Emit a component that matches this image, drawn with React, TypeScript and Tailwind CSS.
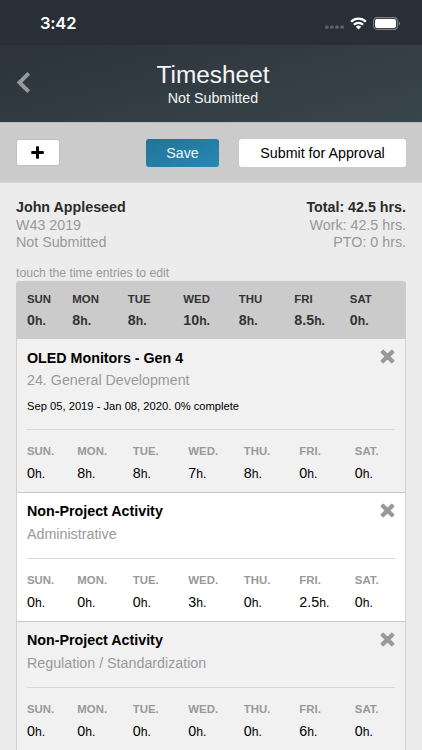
type Entry = {
  title: string;
  detail: string;
  dates?: string;
  hours: string[];
  shaded: boolean;
};

const DAYS = ['SUN', 'MON', 'TUE', 'WED', 'THU', 'FRI', 'SAT'];
const TOTALS = ['0', '8', '8', '10', '8', '8.5', '0'];

const ENTRIES: Entry[] = [
  {
    title: 'OLED Monitors - Gen 4',
    detail: '24. General Development',
    dates: 'Sep 05, 2019 - Jan 08, 2020. 0% complete',
    hours: ['0', '8', '8', '7', '8', '0', '0'],
    shaded: true,
  },
  {
    title: 'Non-Project Activity',
    detail: 'Administrative',
    hours: ['0', '0', '0', '3', '0', '2.5', '0'],
    shaded: false,
  },
  {
    title: 'Non-Project Activity',
    detail: 'Regulation / Standardization',
    hours: ['0', '0', '0', '0', '0', '6', '0'],
    shaded: true,
  },
];

function StatusBar() {
  return (
    <div className="flex h-[45px] items-center bg-[#292f36] pl-[40px] pr-[21px] pt-[2px]">
      <span className="-mt-px font-['Inter',sans-serif] text-[16.5px] font-semibold leading-5 tracking-[-0.2px]">3:42</span>
      <svg className="ml-auto mt-[7px]" width="19" height="4" viewBox="0 0 19 4" fill="#5b6167">
        <rect x="0" y="0.4" width="3.6" height="3.4" rx="1" />
        <rect x="5.1" y="0.4" width="3.6" height="3.4" rx="1" />
        <rect x="10.2" y="0.4" width="3.6" height="3.4" rx="1" />
        <rect x="15.3" y="0.4" width="3.6" height="3.4" rx="1" />
      </svg>
      <svg className="ml-[6px]" width="17" height="13" viewBox="0 0 17 13" fill="none" stroke="#fff" strokeWidth="2.3">
        <path d="M1.1 4.7a10.5 10.5 0 0 1 14.8 0" />
        <path d="M3.9 7.7a6.5 6.5 0 0 1 9.2 0" />
        <path d="M8.5 12.5 5.8 9.8a3.8 3.8 0 0 1 5.4 0z" fill="#fff" stroke="none" />
      </svg>
      <svg className="ml-[6px]" width="28" height="13" viewBox="0 0 28 13">
        <rect x="0.6" y="0.6" width="23.8" height="11.8" rx="3.4" fill="none" stroke="#7d8286" strokeWidth="1.1" />
        <rect x="2" y="2" width="21" height="9" rx="2" fill="#fff" />
        <path d="M25.7 4.5c1.7.5 1.7 3.5 0 4z" fill="#7d8286" />
      </svg>
    </div>
  );
}

function CloseIcon() {
  return (
    <svg className="mt-[9.5px] shrink-0" width="15" height="15" viewBox="0 0 15 15">
      <path
        d="M3.2 1.6 7.5 5.9 11.8 1.6 13.4 3.2 9.1 7.5 13.4 11.8 11.8 13.4 7.5 9.1 3.2 13.4 1.6 11.8 5.9 7.5 1.6 3.2z"
        fill="#999"
        stroke="#999"
        strokeWidth="2"
        strokeLinejoin="round"
      />
    </svg>
  );
}

function Hours({ value }: { value: string }) {
  return (
    <div className="h-[18px] whitespace-nowrap text-[14.27px] leading-[18px]">
      {value}
      <span className="text-[12.2px]">h.</span>
    </div>
  );
}

function EntryCard({ entry }: { entry: Entry }) {
  return (
    <section className={`border-b border-[#c8c8c8] px-[10px] ${entry.shaded ? 'bg-[#f1f1f1]' : 'bg-white'}`}>
      <div className="flex justify-between">
        <div className={entry.dates ? 'pt-[9px]' : 'pt-[8px]'}>
          <h2 className={`text-[14.27px] font-bold leading-5 text-black ${entry.dates ? 'h-[22px]' : 'h-[23px]'}`}>
            {entry.title}
          </h2>
          <p className="h-5 text-[14.27px] leading-[21px] text-[#999]">{entry.detail}</p>
          {entry.dates && <p className="mt-[7px] h-[18px] text-[11.2px] leading-[18px] text-black">{entry.dates}</p>}
        </div>
        <CloseIcon />
      </div>
      <div className="mt-[14px] border-t border-[#d8d8d8]" />
      <div className="grid grid-cols-[50.3px_repeat(5,55.5px)_1fr] pb-[10px] pt-[13px]">
        {DAYS.map((day, i) => (
          <div key={day}>
            <div className="h-[21px] text-[11.4px] font-bold leading-4 text-[#999]">{day}.</div>
            <div className="text-black">
              <Hours value={entry.hours[i]} />
            </div>
          </div>
        ))}
      </div>
    </section>
  );
}

export default function App() {
  return (
    <div className="h-[750px] overflow-hidden bg-[#ececec] font-['Liberation_Sans',Arial,sans-serif]">
      <header className="h-[122px] bg-linear-[165deg,#292f36,#39454c] text-white">
        <StatusBar />
        <div className="grid h-[77px] grid-cols-[48px_1fr_44px]">
          <svg className="ml-[16px] mt-[26px]" width="15" height="23" viewBox="0 0 15 23" fill="none" stroke="#969a9e" strokeWidth="4">
            <path d="M12.7 2.4 3.5 11.5l9.2 9.1" />
          </svg>
          <div className="pt-[16px] text-center text-[#f4f5f6]">
            <h1 className="h-[27px] text-[24.4px] leading-[28px]">Timesheet</h1>
            <p className="h-[20px] text-[14.27px] leading-[20px]">Not Submitted</p>
          </div>
        </div>
      </header>

      <div className="flex h-[61px] items-center border-b border-t border-b-[#d8d8d8] border-t-[#bdbdbd] bg-[#cbcbcb] px-[16px]">
        <button className="flex h-[27px] w-[44px] items-center justify-center rounded-[3px] border border-[#bfbfbf] bg-white pr-px">
          <svg width="13" height="13" viewBox="0 0 13 13" fill="#000">
            <rect x="5" y="0.3" width="3" height="12.4" rx="0.8" />
            <rect x="0.2" y="5" width="12.6" height="3" rx="0.8" />
          </svg>
        </button>
        <button className="ml-[86px] h-[28px] w-[73px] rounded-[3px] bg-linear-to-br from-[#237397] to-[#2589b6] text-[14.27px] leading-[28px] text-[#f0f6f9]">
          Save
        </button>
        <button className="ml-auto h-[28px] w-[167px] rounded-[3px] bg-white text-[14.27px] leading-[28px] text-black">
          Submit for Approval
        </button>
      </div>

      <main className="px-[16px] pt-[15px]">
        <div className="flex justify-between text-[14.27px] leading-[17px] text-[#999]">
          <div>
            <p className="h-[18.5px] font-bold leading-[18px] text-[#2b2b2b]">John Appleseed</p>
            <p>W43 2019</p>
            <p>Not Submitted</p>
          </div>
          <div className="text-right">
            <p className="h-[18.5px] font-bold leading-[18px] text-[#2b2b2b]">Total: 42.5 hrs.</p>
            <p>Work: 42.5 hrs.</p>
            <p>PTO: 0 hrs.</p>
          </div>
        </div>
        <p className="mt-[14.5px] h-[16px] text-[12.2px] leading-[16px] text-[#999]">touch the time entries to edit</p>

        <div className="overflow-hidden rounded-t-[3px]">
          <div className="grid h-[58px] grid-cols-[45.3px_repeat(5,55.5px)_1fr] bg-[#cbcbcb] pl-[11px] pt-[10px] text-[#333]">
            {DAYS.map((day, i) => (
              <div key={day} className="font-bold">
                <div className="h-5 text-[11.4px] leading-4">{day}</div>
                <Hours value={TOTALS[i]} />
              </div>
            ))}
          </div>
          <div className="border-x border-[#d2d2d2]">
            {ENTRIES.map((entry) => (
              <EntryCard key={entry.detail} entry={entry} />
            ))}
          </div>
        </div>
      </main>
    </div>
  );
}
